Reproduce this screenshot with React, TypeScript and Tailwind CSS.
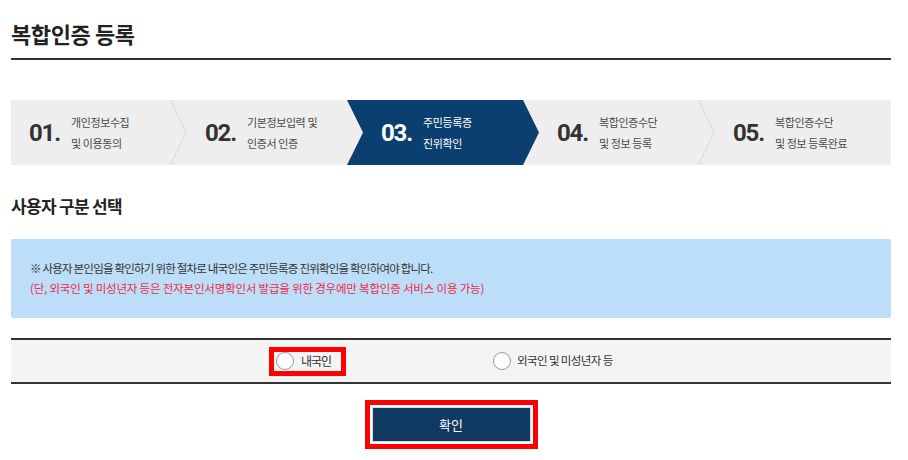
import React from "react";

const KR = "font-['Noto_Sans_CJK_KR','Noto_Sans',sans-serif]";

const steps = [
  { no: "01.", lines: ["개인정보수집", "및 이용동의"] },
  { no: "02.", lines: ["기본정보입력 및", "인증서 인증"] },
  { no: "03.", lines: ["주민등록증", "진위확인"] },
  { no: "04.", lines: ["복합인증수단", "및 정보 등록"] },
  { no: "05.", lines: ["복합인증수단", "및 정보 등록완료"] }
];

const ACTIVE = 2;

function Radio() {
  return <span className="block h-[18px] w-[18px] shrink-0 rounded-full border border-[#9a9a9a] bg-white"></span>;
}

export default function App() {
  return (
    <div className={`min-h-[460px] w-[908px] bg-white ${KR}`}>
      <div className="ml-[11px] w-[880px]">
        {/* Page title */}
        <h1 className="border-b-2 border-[#333] pt-[17px] pb-[9px] text-[22px] font-bold leading-[32px] tracking-[-0.4px] text-[#222]">
          복합인증 등록
        </h1>

        {/* Step indicator */}
        <div className="mt-[40px] flex h-[65px] bg-[#eeeeee]">
          {steps.map((step, i) => {
            const active = i === ACTIVE;
            const showSep = i !== ACTIVE && i !== ACTIVE - 1 && i < steps.length - 1;
            return (
              <div key={step.no} className="relative flex h-full w-[176px] items-center pl-[18px]">
                {active && (
                  <svg className="absolute top-0 left-[-16px] h-[65px] w-[192px]" viewBox="0 0 192 65">
                    <polygon points="0,0 176,0 192,32.5 176,65 0,65 16,32.5" fill="#0b3f6f" />
                  </svg>
                )}
                {showSep && (
                  <svg className="absolute top-0 right-0 h-[65px] w-[17px]" viewBox="0 0 17 65">
                    <polyline points="0.5,0 16,32.5 0.5,65" fill="none" stroke="#d9d9d9" strokeWidth="1" />
                  </svg>
                )}
                <span
                  className={`relative w-[42px] font-['Roboto',sans-serif] text-[24px] font-bold tracking-[-1.2px] ${
                    active ? "text-white" : "text-[#333]"
                  }`}
                >
                  {step.no}
                </span>
                <div
                  className={`relative text-[11px] leading-[21px] tracking-[-0.4px] ${
                    active ? "text-white" : "text-[#4a4a4a]"
                  }`}
                >
                  <p>{step.lines[0]}</p>
                  <p>{step.lines[1]}</p>
                </div>
              </div>
            );
          })}
        </div>

        {/* Section heading */}
        <h2 className="mt-[29px] text-[17px] font-bold leading-[24px] tracking-[-0.7px] text-[#222]">사용자 구분 선택</h2>

        {/* Notice box */}
        <div className="mt-[21px] h-[79px] rounded-[2px] bg-[#bcdef8] pt-[19px] pl-[19px] text-[11.5px] leading-[20px]">
          <p className="tracking-[-0.8px] text-[#333]">
            ※ 사용자 본인임을 확인하기 위한 절차로 내국인은 주민등록증 진위확인을 확인하여야 합니다.
          </p>
          <p className="tracking-[-0.2px] text-[#ee2a4c]">
            (단, 외국인 및 미성년자 등은 전자본인서명확인서 발급을 위한 경우에만 복합인증 서비스 이용 가능)
          </p>
        </div>

        {/* User type radio row */}
        <div className="mt-[20px] flex h-[46px] items-center justify-center gap-[147px] border-y-2 border-[#333] bg-[#f4f4f4] pr-[13px]">
          <label className="flex h-[29px] w-[77px] items-center gap-[7px] border-[5px] border-[#ff0000] pl-[2px]">
            <Radio />
            <span className="text-[12px] tracking-[-1px] text-[#333]">내국인</span>
          </label>
          <label className="flex w-[127px] items-center gap-[6px]">
            <Radio />
            <span className="text-[11.5px] tracking-[-0.6px] whitespace-nowrap text-[#333]">외국인 및 미성년자 등</span>
          </label>
        </div>

        {/* Confirm button */}
        <div className="mx-auto mt-[16px] w-[173px] border-[5px] border-[#ff0000] bg-white p-[2px]">
          <button className="flex h-[35px] w-full items-center justify-center border border-[#d5dbe2] bg-[#103a62] text-[13px] text-white">
            확인
          </button>
        </div>
      </div>
    </div>
  );
}
